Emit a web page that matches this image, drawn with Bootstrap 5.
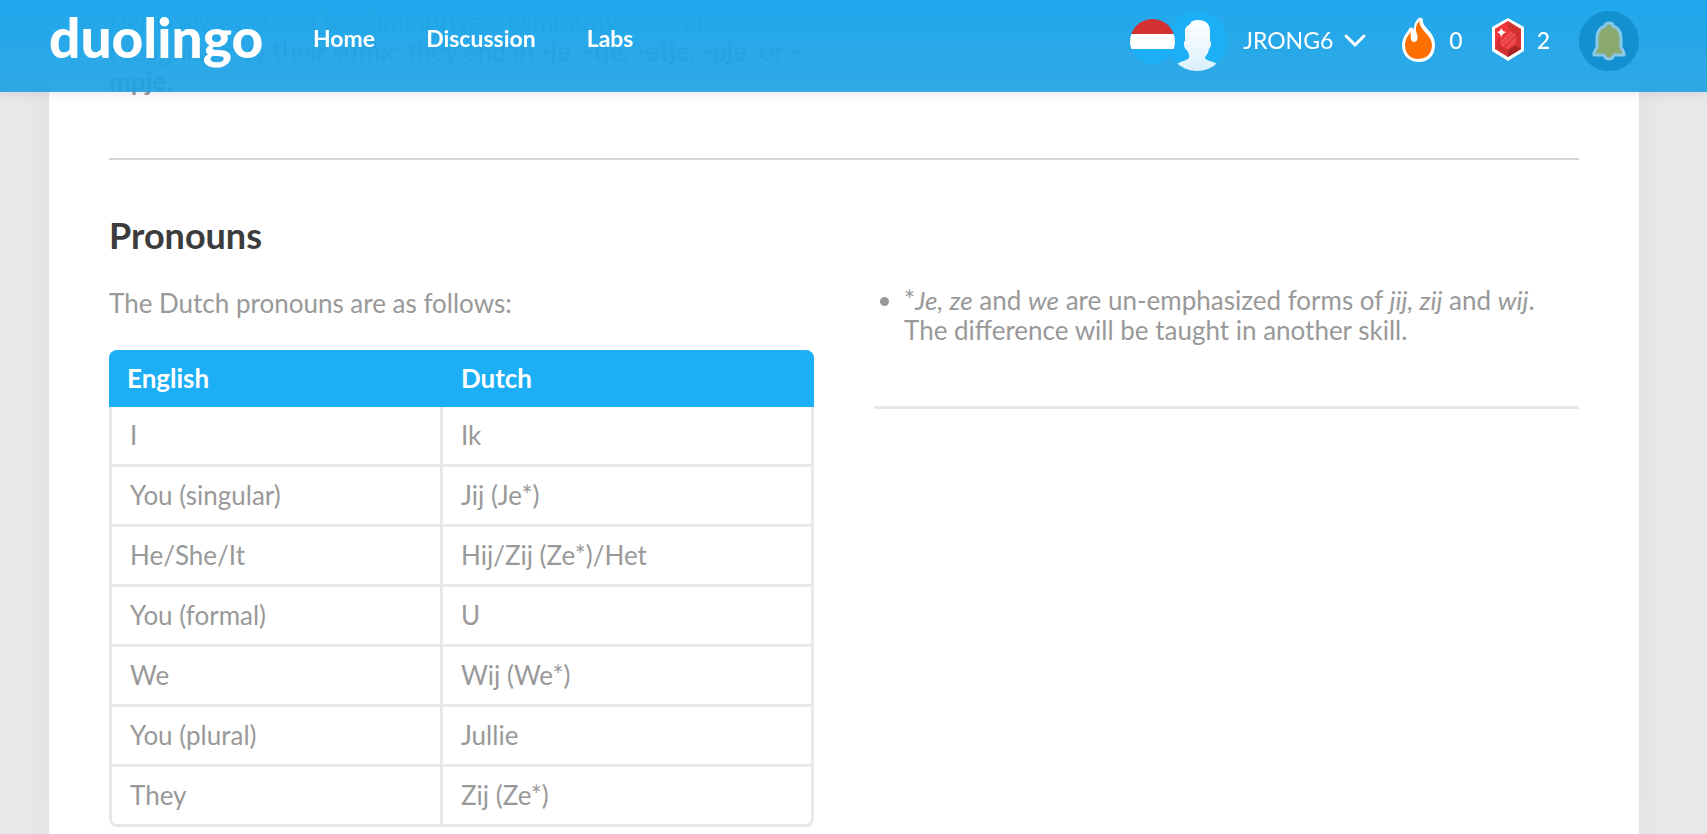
<!DOCTYPE html>
<html lang="en">
<head>
<meta charset="utf-8">
<meta name="viewport" content="width=device-width, initial-scale=1">
<title>Duolingo: Pronouns</title>
<link href="https://cdn.jsdelivr.net/npm/bootstrap@5.3.0/dist/css/bootstrap.min.css" rel="stylesheet">
<style>
body{font-family:Lato,"Noto Sans",sans-serif;font-size:26px;line-height:30px;color:#999;background:#e8e8e8}
.topbar{height:92px;padding:0 68px 10px 49px;background:linear-gradient(rgba(27,166,236,.98),rgba(31,161,226,.92));box-shadow:0 0 12px rgba(0,0,0,.12);color:#fff;font-size:23px;font-weight:500}
.topbar a,.topbar button{color:#fff;text-decoration:none}
.topbar svg{flex:none}
.wordmark{padding-bottom:8px;font:900 55px/60px Lato,sans-serif;width:212px}
.main-links{gap:51px;margin-left:52px;padding-bottom:6px;font-weight:700}
.user-menu{margin-right:5px}
.user-menu .chevron{margin-left:10px}
.flag{margin-right:-8px;z-index:1}
.user-tools{gap:29px}
.user-tools span{padding-bottom:2px}
.counter{gap:13px}
.bell-btn{width:60px;height:60px;background:#1390d0}
.sheet{margin:0 68px 0 49px;padding:6px 60px 7px;min-height:100vh;background:#fff;box-shadow:0 0 30px rgba(0,0,0,.04)}
.cols{--bs-gutter-x:60px}
.divider{height:2px;margin:62px 0 50px;border:0;background:#d8d8d8;opacity:1}
.thin{height:3px;margin:61px 0 0;border:0;background:#e8e8e8;opacity:1}
h2{margin-bottom:28px;font-size:36px;line-height:50px;font-weight:700;color:#3c3c3c}
.lead-in{margin-bottom:32px}
.words{border-collapse:separate;border-spacing:0;table-layout:fixed}
.words th{height:57px;padding:0 18px 2px;background:#1caff6;color:#fff;font-weight:700}
.words th:first-child{width:334px;border-top-left-radius:8px}
.words th:last-child{border-top-right-radius:8px}
.words td{height:60px;padding:0 18px 2px;border:solid #e8e8e8;border-width:0 3px 3px 0}
.words td:first-child{border-left-width:3px}
.words tr:last-child td:first-child{border-bottom-left-radius:8px}
.words tr:last-child td:last-child{border-bottom-right-radius:8px}
.notes{padding-left:30px}
.right-col{padding-top:75px}
.right-col .thin{margin-top:61px}
</style>
</head>
<body>
<header class="topbar fixed-top d-flex align-items-center">
  <a href="#" class="wordmark">duolingo</a>
  <nav class="main-links d-flex" aria-label="Main"><a href="#">Home</a><a href="#">Discussion</a><a href="#">Labs</a></nav>
  <div class="user-tools ms-auto d-flex align-items-center">
    <button class="user-menu border-0 bg-transparent p-0 d-flex align-items-center" type="button">
      <svg class="flag" width="45" height="45" viewBox="0 0 45 45" aria-hidden="true"><clipPath id="fc"><circle cx="22.500" cy="22.500" r="22.500"/></clipPath><g clip-path="url(#fc)"><path fill="#d33131" d="M0 0h45v15H0z"/><path fill="#fff" d="M0 15h45v15H0z"/><path fill="#1caff6" d="M0 30h45v15H0z"/></g></svg>
      <svg width="60" height="60" viewBox="0 0 60 60" aria-hidden="true"><defs><linearGradient id="av" x2="0" y2="1"><stop stop-color="#fff"/><stop offset="1" stop-color="#d8effc"/></linearGradient><clipPath id="ac"><circle cx="30" cy="30" r="30"/></clipPath></defs><g clip-path="url(#ac)"><path fill="#1caff6" d="M0 0h60v60H0z"/><path fill="url(#av)" d="M23 13c1-3 4-4 7-4 8 0 13 3 13 11v10c2 0 1 7-1 8-1 6-4 7-4 9 1 2 5 3 8 4 3 1 4 2 5 3L44 62H17L10 53c4-3 9-3 12-6 1-3-1-5-2-8-3 0-4-9-2-9V19c0-2 2-4 5-6z"/></g></svg>
      <span class="ms-3">JRONG6</span>
      <svg class="chevron" width="24" height="16" viewBox="0 0 24 16" fill="none" stroke="#fff" stroke-width="3" stroke-linecap="round" stroke-linejoin="round" aria-hidden="true"><path d="M3 3l9 9 9-9"/></svg>
    </button>
    <a href="#" class="counter d-flex align-items-center" aria-label="Streak 0">
      <svg width="35" height="48" viewBox="0 0 35 48" aria-hidden="true"><path d="M18 1c2-1 4 0 4 3 0 7 12 11 12 24 0 11-7 17-16 17S1 39 1 28c0-6 3-10 7-16 1-2 4-2 5 1C13 8 14 4 18 1z" fill="#fff"/><path d="M18.500 4C18 13 31 18 31 28c0 9-6 14-14 14S4 36 4 28c0-5 2-9 6-13-1 6 0 10 3 10 4 0 4-4 3-8-2-5-1-10 2.500-13z" fill="#ff6f00"/></svg>
      <span>0</span>
    </a>
    <a href="#" class="counter d-flex align-items-center" aria-label="Gems 2">
      <svg width="32" height="46" viewBox="0 0 32 46" aria-hidden="true"><path fill="#fff" d="M16 0l16 9v24l-16 10L0 33V9z"/><path fill="#d33131" d="M16 3l13 8v20l-13 8-13-8V11z"/><path fill="#f2353a" d="M16 3v9l-8 5-5 13V11z"/><path fill="#aa2424" d="M16 39v-7l7-5 6 4z"/><path fill="#e8383b" d="M16 12l8 5v10l-8 5-8-5V17z"/><path stroke="#ee5256" stroke-width="2" d="M9 25l11-11M10 28l13-12M15 30l9-9"/><path fill="#fff" d="M9 10l2 3 3 1-3 2-2 3-1-3-3-2 3-1z"/></svg>
      <span>2</span>
    </a>
    <button class="bell-btn border-0 rounded-circle p-0 d-flex align-items-center justify-content-center" type="button" aria-label="Notifications">
      <svg width="34" height="40" viewBox="0 0 34 40" aria-hidden="true"><path d="M17 2c3 0 4 1 4 3 6 2 8 6 8 12v9l3 6v2H22c-1 3-2 4-5 4s-4-1-5-4H2v-2l3-6v-9C5 11 7 7 13 5c0-2 1-3 4-3z" fill="#89a96e" stroke="#88c8e8" stroke-width="3" stroke-linejoin="round"/></svg>
    </button>
  </div>
</header>
<main class="sheet">
  <div class="row cols"><p class="col-6 mb-0"><em>Het</em> is always used for diminutives. Diminutives can be recognised by their suffix; they end in <strong>-je</strong>, <strong>-tje</strong>, <strong>-etje</strong>, <strong>-pje</strong>, or <strong>-mpje</strong>.</p></div>
  <hr class="divider">
  <div class="row cols">
    <section class="col-6">
      <h2>Pronouns</h2>
      <p class="lead-in">The Dutch pronouns are as follows:</p>
      <table class="words w-100">
        <thead><tr><th scope="col">English</th><th scope="col">Dutch</th></tr></thead>
        <tbody>
          <tr><td>I</td><td>Ik</td></tr>
          <tr><td>You (singular)</td><td>Jij (Je*)</td></tr>
          <tr><td>He/She/It</td><td>Hij/Zij (Ze*)/Het</td></tr>
          <tr><td>You (formal)</td><td>U</td></tr>
          <tr><td>We</td><td>Wij (We*)</td></tr>
          <tr><td>You (plural)</td><td>Jullie</td></tr>
          <tr><td>They</td><td>Zij (Ze*)</td></tr>
        </tbody>
      </table>
    </section>
    <section class="col-6 right-col">
      <ul class="notes mb-0"><li>*<em>Je, ze</em> and <em>we</em> are un-emphasized forms of <em>jij, zij</em> and <em>wij</em>. The difference will be taught in another skill.</li></ul>
      <hr class="thin">
    </section>
  </div>
</main>
<script src="https://cdn.jsdelivr.net/npm/bootstrap@5.3.0/dist/js/bootstrap.bundle.min.js"></script>
</body>
</html>
